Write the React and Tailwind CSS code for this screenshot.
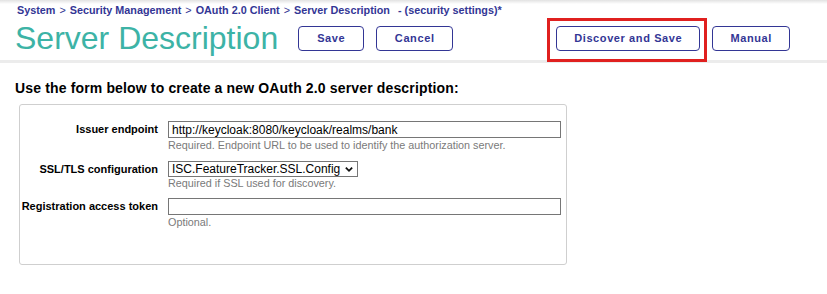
import React from 'react';

const navy = 'text-[#333695]';

const crumbs = ['System', 'Security Management', 'OAuth 2.0 Client', 'Server Description'];

function HeaderButton({ label, width }) {
    return (
        <button
            type="button"
            className={`h-[25px] ${width} shrink-0 rounded-[4px] border border-[#333695] bg-white text-[11px] font-bold tracking-[0.6px] ${navy}`}
        >
            {label}
        </button>
    );
}

function Field({ label, help, helpGap = 'mt-0', bottom = 'pb-0', children }) {
    return (
        <>
            <div className="text-right text-[11px] font-bold leading-[17px] text-black">{label}</div>
            <div className={`flex flex-col ${bottom}`}>
                {children}
                <div className={`${helpGap} text-[10.8px] leading-[13px] text-[#7a7a7a]`}>{help}</div>
            </div>
        </>
    );
}

export default function App() {
    return (
        <div className="relative h-[294px] w-[827px] overflow-hidden bg-white font-['Liberation_Sans',Arial,sans-serif]">
            {/* top shadow */}
            <div className="h-[4px] bg-gradient-to-b from-[#e2e2e2] to-white" />

            {/* Breadcrumb */}
            <div className={`pl-[17px] text-[10.8px] font-bold leading-[13px] ${navy}`}>
                {crumbs.map((c, i) => (
                    <span key={c}>
                        {i > 0 && <span className="mx-[4px] font-normal">&gt;</span>}
                        {c}
                    </span>
                ))}
                <span className="ml-[8px]">- (security settings)*</span>
            </div>

            {/* Title row */}
            <div className="mt-[3px] flex h-[36px] items-center pl-[15px]">
                <h1 className="text-[32px] font-normal leading-[36px] text-[#3db3a6]">Server Description</h1>
                <div className="ml-[20px] flex items-center">
                    <HeaderButton label="Save" width="w-[66px]" />
                    <div className="ml-[12px]">
                        <HeaderButton label="Cancel" width="w-[77px]" />
                    </div>
                    <div className="ml-[103px]">
                        <HeaderButton label="Discover and Save" width="w-[144px]" />
                    </div>
                    <div className="ml-[12px]">
                        <HeaderButton label="Manual" width="w-[78px]" />
                    </div>
                </div>
            </div>

            <div className="mt-[4px] h-[3px] bg-[#ececec]" />

            {/* Intro */}
            <div className="mt-[17px] pl-[15px] text-[14px] font-bold leading-[16px] tracking-[0.15px] text-black">
                Use the form below to create a new OAuth 2.0 server description:
            </div>

            {/* Form box */}
            <div className="ml-[19px] mt-[8px] h-[161px] w-[548px] rounded-[3px] border border-[#cfcfcf] pt-[16px]">
                <div className="grid grid-cols-[138px_393px] gap-x-[10px]">
                    <Field
                        label="Issuer endpoint"
                        help="Required. Endpoint URL to be used to identify the authorization server."
                        helpGap="mt-[1px]"
                        bottom="pb-[9px]"
                    >
                        <div className="flex h-[17px] items-center border border-[#767676] pl-[3px] text-[12px] text-black">
                            http://keycloak:8080/keycloak/realms/bank
                        </div>
                    </Field>
                    <Field label="SSL/TLS configuration" help="Required if SSL used for discovery." bottom="pb-[8px]">
                        <div className="flex h-[16px] w-[190px] items-center justify-between border border-[#767676] pl-[3px] pr-[3px] text-[12px] text-black">
                            <span>ISC.FeatureTracker.SSL.Config</span>
                            <svg viewBox="0 0 10 10" className="h-[9px] w-[10px]" fill="none" stroke="#111" strokeWidth="2">
                                <path d="M1.5 3l3.5 3.5L8.5 3" />
                            </svg>
                        </div>
                    </Field>
                    <Field label="Registration access token" help="Optional." helpGap="mt-[1px]">
                        <div className="h-[17px] border border-[#767676]" />
                    </Field>
                </div>
            </div>

            {/* highlight annotation */}
            <div className="absolute left-[547px] top-[18px] h-[44px] w-[160px] border-[3px] border-[#e0201f]" />
        </div>
    );
}
